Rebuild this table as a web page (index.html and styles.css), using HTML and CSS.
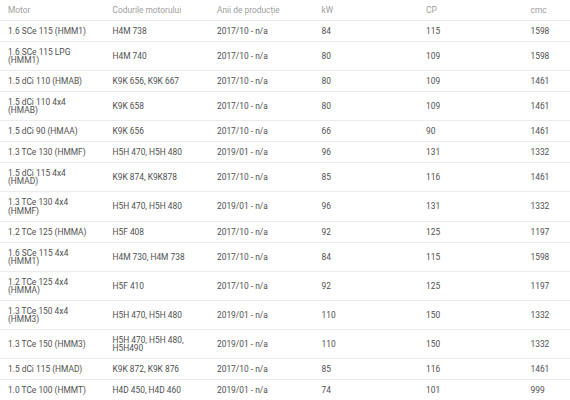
FILE: index.html
```html
<!DOCTYPE html>
<html lang="ro">
<head>
<meta charset="utf-8">
<title>Motoare</title>
<link rel="stylesheet" href="styles.css">
</head>
<body>
<div class="page">
<table class="engines">
<thead>
<tr><th>Motor</th><th>Codurile motorului</th><th>Anii de producție</th><th>kW</th><th>CP</th><th>cmc</th></tr>
</thead>
<tbody>
<tr><td>1.6 SCe 115 (HMM1)</td><td>H4M 738</td><td>2017/10 - n/a</td><td>84</td><td>115</td><td>1598</td></tr>
<tr><td>1.6 SCe 115 LPG (HMM1)</td><td>H4M 740</td><td>2017/10 - n/a</td><td>80</td><td>109</td><td>1598</td></tr>
<tr><td>1.5 dCi 110 (HMAB)</td><td>K9K 656, K9K 667</td><td>2017/10 - n/a</td><td>80</td><td>109</td><td>1461</td></tr>
<tr><td>1.5 dCi 110 4x4 (HMAB)</td><td>K9K 658</td><td>2017/10 - n/a</td><td>80</td><td>109</td><td>1461</td></tr>
<tr><td>1.5 dCi 90 (HMAA)</td><td>K9K 656</td><td>2017/10 - n/a</td><td>66</td><td>90</td><td>1461</td></tr>
<tr><td>1.3 TCe 130 (HMMF)</td><td>H5H 470, H5H 480</td><td>2019/01 - n/a</td><td>96</td><td>131</td><td>1332</td></tr>
<tr><td>1.5 dCi 115 4x4 (HMAD)</td><td>K9K 874, K9K878</td><td>2017/10 - n/a</td><td>85</td><td>116</td><td>1461</td></tr>
<tr><td>1.3 TCe 130 4x4 (HMMF)</td><td>H5H 470, H5H 480</td><td>2019/01 - n/a</td><td>96</td><td>131</td><td>1332</td></tr>
<tr><td>1.2 TCe 125 (HMMA)</td><td>H5F 408</td><td>2017/10 - n/a</td><td>92</td><td>125</td><td>1197</td></tr>
<tr><td>1.6 SCe 115 4x4 (HMM1)</td><td>H4M 730, H4M 738</td><td>2017/10 - n/a</td><td>84</td><td>115</td><td>1598</td></tr>
<tr><td>1.2 TCe 125 4x4 (HMMA)</td><td>H5F 410</td><td>2017/10 - n/a</td><td>92</td><td>125</td><td>1197</td></tr>
<tr><td>1.3 TCe 150 4x4 (HMM3)</td><td>H5H 470, H5H 480</td><td>2019/01 - n/a</td><td>110</td><td>150</td><td>1332</td></tr>
<tr><td>1.3 TCe 150 (HMM3)</td><td>H5H 470, H5H 480, H5H490</td><td>2019/01 - n/a</td><td>110</td><td>150</td><td>1332</td></tr>
<tr><td>1.5 dCi 115 (HMAD)</td><td>K9K 872, K9K 876</td><td>2017/10 - n/a</td><td>85</td><td>116</td><td>1461</td></tr>
<tr><td>1.0 TCe 100 (HMMT)</td><td>H4D 450, H4D 460</td><td>2019/01 - n/a</td><td>74</td><td>101</td><td>999</td></tr>
</tbody>
</table>
</div>
</body>
</html>
```
FILE: styles.css
```css
html, body {
  margin: 0;
  padding: 0;
  background: #ffffff;
  overflow: hidden;
}

.page {
  width: 570px;
  overflow: hidden;
  font-family: Roboto, "Liberation Sans", sans-serif;
}

.engines {
  width: 627px;
  table-layout: fixed;
  border-collapse: collapse;
  font-size: 8.4px;
  line-height: 8.2px;
}

.engines th,
.engines td {
  text-align: left;
  vertical-align: middle;
  padding: 5.9px 8px;
  border-bottom: 1px solid #ececec;
}

.engines th {
  font-weight: 400;
  color: #a0a0a0;
  height: 7px;
}

.engines td {
  font-weight: 400;
  color: #505050;
}
```
